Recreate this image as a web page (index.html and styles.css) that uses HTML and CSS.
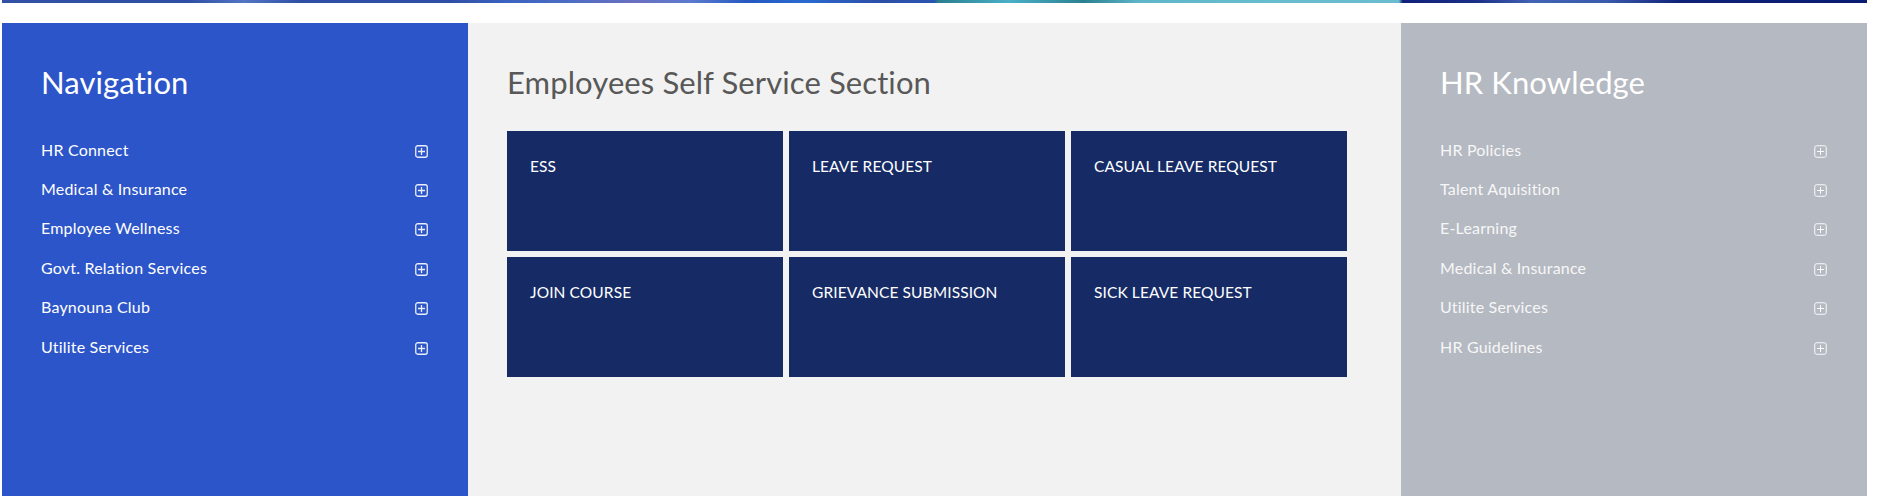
FILE: index.html
```html
<!DOCTYPE html>
<html lang="en">
<head>
<meta charset="utf-8">
<title>HR Portal</title>
<link rel="stylesheet" href="styles.css">
</head>
<body>
<div class="page">
  <div class="strip"></div>
  <div class="main">
    <aside class="panel panel-nav">
      <h2 class="panel-title">Navigation</h2>
      <ul class="menu">
        <li class="menu-item"><span>HR Connect</span><svg class="plus" viewBox="0 0 13 13"><rect x="0.75" y="0.75" width="11.5" height="11.5" rx="2"/><path d="M6.5 3v7M3 6.5h7"/></svg></li>
        <li class="menu-item"><span>Medical &amp; Insurance</span><svg class="plus" viewBox="0 0 13 13"><rect x="0.75" y="0.75" width="11.5" height="11.5" rx="2"/><path d="M6.5 3v7M3 6.5h7"/></svg></li>
        <li class="menu-item"><span>Employee Wellness</span><svg class="plus" viewBox="0 0 13 13"><rect x="0.75" y="0.75" width="11.5" height="11.5" rx="2"/><path d="M6.5 3v7M3 6.5h7"/></svg></li>
        <li class="menu-item"><span>Govt. Relation Services</span><svg class="plus" viewBox="0 0 13 13"><rect x="0.75" y="0.75" width="11.5" height="11.5" rx="2"/><path d="M6.5 3v7M3 6.5h7"/></svg></li>
        <li class="menu-item"><span>Baynouna Club</span><svg class="plus" viewBox="0 0 13 13"><rect x="0.75" y="0.75" width="11.5" height="11.5" rx="2"/><path d="M6.5 3v7M3 6.5h7"/></svg></li>
        <li class="menu-item"><span>Utilite Services</span><svg class="plus" viewBox="0 0 13 13"><rect x="0.75" y="0.75" width="11.5" height="11.5" rx="2"/><path d="M6.5 3v7M3 6.5h7"/></svg></li>
      </ul>
    </aside>
    <section class="panel panel-ess">
      <h2 class="panel-title ess-title">Employees Self Service Section</h2>
      <div class="tiles">
        <a class="tile">ESS</a>
        <a class="tile">LEAVE REQUEST</a>
        <a class="tile">CASUAL LEAVE REQUEST</a>
        <a class="tile">JOIN COURSE</a>
        <a class="tile">GRIEVANCE SUBMISSION</a>
        <a class="tile">SICK LEAVE REQUEST</a>
      </div>
    </section>
    <aside class="panel panel-know">
      <h2 class="panel-title">HR Knowledge</h2>
      <ul class="menu">
        <li class="menu-item"><span>HR Policies</span><svg class="plus thin" viewBox="0 0 13 13"><rect x="0.75" y="0.75" width="11.5" height="11.5" rx="2"/><path d="M6.5 3v7M3 6.5h7"/></svg></li>
        <li class="menu-item"><span>Talent Aquisition</span><svg class="plus thin" viewBox="0 0 13 13"><rect x="0.75" y="0.75" width="11.5" height="11.5" rx="2"/><path d="M6.5 3v7M3 6.5h7"/></svg></li>
        <li class="menu-item"><span>E-Learning</span><svg class="plus thin" viewBox="0 0 13 13"><rect x="0.75" y="0.75" width="11.5" height="11.5" rx="2"/><path d="M6.5 3v7M3 6.5h7"/></svg></li>
        <li class="menu-item"><span>Medical &amp; Insurance</span><svg class="plus thin" viewBox="0 0 13 13"><rect x="0.75" y="0.75" width="11.5" height="11.5" rx="2"/><path d="M6.5 3v7M3 6.5h7"/></svg></li>
        <li class="menu-item"><span>Utilite Services</span><svg class="plus thin" viewBox="0 0 13 13"><rect x="0.75" y="0.75" width="11.5" height="11.5" rx="2"/><path d="M6.5 3v7M3 6.5h7"/></svg></li>
        <li class="menu-item"><span>HR Guidelines</span><svg class="plus thin" viewBox="0 0 13 13"><rect x="0.75" y="0.75" width="11.5" height="11.5" rx="2"/><path d="M6.5 3v7M3 6.5h7"/></svg></li>
      </ul>
    </aside>
  </div>
</div>
</body>
</html>
```
FILE: styles.css
```css
* { box-sizing: border-box; }

html, body {
  margin: 0;
  padding: 0;
  background: #ffffff;
  overflow: hidden;
}

body {
  font-family: Lato, "Open Sans", "Liberation Sans", sans-serif;
}

.page {
  width: 1865px;
  margin-left: 2px;
}

.strip {
  height: 3px;
  background: linear-gradient(90deg,
    #3150a6 0%, #2f4fa6 10%, #5474c4 13%, #2f4fa6 16%,
    #2f4fa6 24%, #3a62c0 27%, #4a6cc4 30%, #6a70c0 34%,
    #5a7ad0 37%, #2558c0 40%, #2a6ad0 43%, #2c4fa8 47%,
    #2a55b0 50%, #2a7f8f 50.2%, #4ab0c8 54%, #2b8090 58%,
    #5fb6ca 61%, #68bccf 68%, #6abccf 74.9%,
    #10217a 75.1%, #1a2f88 79%, #4262b4 82%, #3a5aac 86%,
    #0f2278 90%, #0a1c72 100%);
}

.main {
  margin-top: 20px;
  display: grid;
  grid-template-columns: 466px 933px 466px;
  height: 480px;
}

.panel {
  padding: 41px 40px 0 39px;
}

.panel-nav { background: #2c55c9; }
.panel-ess { background: #f2f2f2; }
.panel-know { background: #b5b9c1; }

.panel-title {
  margin: 0 0 29px 0;
  font-size: 31px;
  line-height: 36px;
  font-weight: 400;
  color: #ffffff;
  letter-spacing: 0.1px;
}

.ess-title {
  color: #585858;
  margin-bottom: 31px;
}

.menu {
  list-style: none;
  margin: 0;
  padding: 0;
}

.menu-item {
  display: flex;
  align-items: center;
  justify-content: space-between;
  height: 39.4px;
  font-size: 16px;
  letter-spacing: 0.2px;
  color: #ffffff;
  padding-top: 1px;
}

.panel-know .menu-item { color: #f7f7f8; }

.plus {
  width: 13px;
  height: 13px;
  flex: none;
  margin-top: 4px;
  fill: none;
  stroke: #ffffff;
  stroke-width: 1.3;
  opacity: 0.9;
}

.plus.thin {
  stroke-width: 1;
  opacity: 0.95;
}

.tiles {
  display: grid;
  grid-template-columns: repeat(3, 276px);
  grid-auto-rows: 120px;
  gap: 6px;
}

.tile {
  display: block;
  background: #162b66;
  color: #ffffff;
  font-size: 15.5px;
  line-height: 18px;
  padding: 26px 23px 0 23px;
  text-transform: uppercase;
  letter-spacing: 0.1px;
}
```
